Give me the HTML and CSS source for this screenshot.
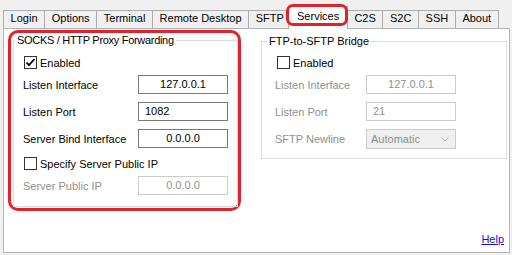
FILE: index.html
```html
<!DOCTYPE html>
<html>
<head>
	<title>Services</title>
	<link rel="stylesheet" href="styles.css">
</head>
<body>
	<div class="window">
		<div class="tabs">
			<div class="tab">Login</div>
			<div class="tab">Options</div>
			<div class="tab">Terminal</div>
			<div class="tab">Remote Desktop</div>
			<div class="tab">SFTP</div>
			<div class="tab active">Services</div>
			<div class="tab">C2S</div>
			<div class="tab">S2C</div>
			<div class="tab">SSH</div>
			<div class="tab">About</div>
		</div>

		<div class="panel">
			<div class="groups">
				<div class="highlight">
					<fieldset class="group socks">
						<legend>SOCKS / HTTP Proxy Forwarding</legend>
						<div class="rows">
							<label class="check">
								<span class="box">
									<svg width="11" height="11" viewBox="0 0 11 11"><path d="M1.5 5.5 L4 8.2 L9.5 2" fill="none" stroke="#000" stroke-width="1.8"/></svg>
								</span>
								Enabled
							</label>
							<div class="field">
								<span class="label">Listen Interface</span>
								<span class="input center">127.0.0.1</span>
							</div>
							<div class="field">
								<span class="label">Listen Port</span>
								<span class="input">1082</span>
							</div>
							<div class="field">
								<span class="label">Server Bind Interface</span>
								<span class="input center">0.0.0.0</span>
							</div>
							<label class="check">
								<span class="box"></span>
								Specify Server Public IP
							</label>
							<div class="field disabled">
								<span class="label">Server Public IP</span>
								<span class="input center">0.0.0.0</span>
							</div>
						</div>
					</fieldset>
				</div>

				<fieldset class="group bridge">
					<legend>FTP-to-SFTP Bridge</legend>
					<div class="rows">
						<label class="check">
							<span class="box"></span>
							Enabled
						</label>
						<div class="field disabled">
							<span class="label">Listen Interface</span>
							<span class="input center">127.0.0.1</span>
						</div>
						<div class="field disabled">
							<span class="label">Listen Port</span>
							<span class="input">21</span>
						</div>
						<div class="field disabled">
							<span class="label">SFTP Newline</span>
							<span class="input select">
								Automatic
								<svg width="8" height="5" viewBox="0 0 8 5"><path d="M0.5 0.5 L4 4 L7.5 0.5" fill="none" stroke="#b4b4b4" stroke-width="1"/></svg>
							</span>
						</div>
					</div>
				</fieldset>
			</div>

			<div class="footer">
				<a href="#">Help</a>
			</div>
		</div>
	</div>
</body>
</html>
```

FILE: styles.css
```css
body {
	margin: 0;
	background-color: #f0f0f0;
	font-family: "Liberation Sans", Arial, sans-serif;
	font-size: 11px;
	color: #000;
}

.window {
	width: 512px;
	height: 255px;
	padding: 0 2px 0 3px;
	box-sizing: border-box;
}

/* tab strip */
.tabs {
	display: flex;
	align-items: flex-end;
	height: 28px;
}

.tab {
	height: 18px;
	box-sizing: border-box;
	padding: 0 6.6px;
	margin-right: -1px;
	border: 1px solid #adadad;
	border-bottom: none;
	background-color: #f0f0f0;
	line-height: 15px;
	text-align: center;
}

.tab.active {
	position: relative;
	z-index: 1;
	height: 23px;
	margin: 0 -1px -1px -2px;
	padding: 0 7.6px;
	background-color: #fff;
	line-height: 18px;
}

.tab.active::after {
	content: '';
	position: absolute;
	left: -3px;
	right: -1px;
	top: -3px;
	bottom: 3px;
	border: 3px solid #e1222b;
	border-radius: 7px;
}

/* page */
.panel {
	height: 225px;
	box-sizing: border-box;
	border: 1px solid #b4b4b4;
	background-color: #fff;
	display: flex;
	flex-direction: column;
}

.groups {
	display: flex;
	align-items: flex-start;
	padding: 1px 0 0 4px;
}

.highlight {
	width: 233px;
	height: 181px;
	box-sizing: border-box;
	border: 3px solid #e1222b;
	border-radius: 10px;
	padding: 0 0 0 2px;
}

.group {
	margin: 0;
	padding: 0;
	min-width: 0;
	box-sizing: border-box;
	border: 1px solid #dcdcdc;
}

.group legend {
	padding: 0 2px;
	line-height: 14px;
}

.socks {
	height: 174px;
}

.socks legend {
	margin-left: 1px;
	letter-spacing: -0.3px;
}

.bridge {
	width: 246px;
	height: 125px;
	margin: 4px 0 0 20px;
}

.bridge legend {
	margin-left: 5px;
}

.rows {
	display: flex;
	flex-direction: column;
	gap: 8px;
	padding-top: 8px;
}

.bridge .rows {
	padding-top: 7px;
}

.check {
	display: flex;
	align-items: center;
	gap: 3px;
	height: 15px;
	margin-bottom: -3px;
	padding-left: 10px;
}

.bridge .check {
	padding-left: 15px;
}

.box {
	width: 13px;
	height: 13px;
	box-sizing: border-box;
	border: 1px solid #333;
	background-color: #fff;
	display: flex;
	align-items: center;
	justify-content: center;
}

.field {
	display: flex;
	align-items: center;
	height: 19px;
	padding-left: 9px;
}

.socks .label {
	width: 115px;
}

.bridge .field {
	padding-left: 13px;
}

.bridge .label {
	width: 91px;
}

.input {
	width: 90px;
	height: 19px;
	box-sizing: border-box;
	border: 1px solid #7a7a7a;
	background-color: #fff;
	padding: 0 6px;
	line-height: 17px;
}

.input.center {
	text-align: center;
}

.disabled {
	color: #8f8f8f;
}

.disabled .input {
	border-color: #cccccc;
}

.input.select {
	height: 20px;
	margin-top: 1px;
	padding: 0 6px 0 4px;
	background-color: #efefef;
	display: flex;
	align-items: center;
	justify-content: space-between;
}

.footer {
	margin-top: auto;
	padding: 0 5px 6px 0;
	text-align: right;
	line-height: 13px;
}

.footer a {
	color: #1414c0;
}
```
